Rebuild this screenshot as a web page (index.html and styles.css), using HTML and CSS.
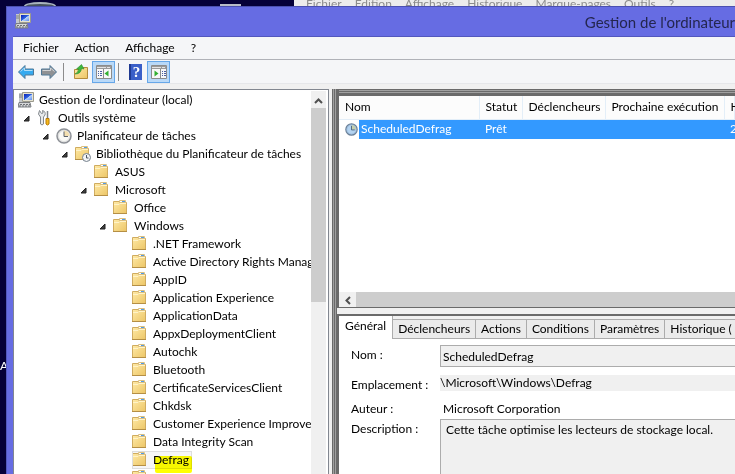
FILE: index.html
```html
<!DOCTYPE html>
<html lang="fr">
<head>
    <meta charset="UTF-8">
    <meta name="viewport" content="width=device-width, initial-scale=1.0">
    <title>Gestion de l'ordinateur</title>
    <link rel="stylesheet" href="styles.css">
</head>
<body>
    <!-- shared icons -->
    <svg class="defs" width="0" height="0" aria-hidden="true">
        <linearGradient id="gold" x1="0" y1="0" x2="1" y2="1">
            <stop offset="0" stop-color="#ffeaa6"/>
            <stop offset="1" stop-color="#ecc566"/>
        </linearGradient>
        <linearGradient id="screen" x1="0" y1="0" x2="1" y2="1">
            <stop offset="0" stop-color="#0a22b8"/>
            <stop offset="0.5" stop-color="#2f63e0"/>
            <stop offset="0.55" stop-color="#b9d4fb"/>
            <stop offset="1" stop-color="#5d8cf0"/>
        </linearGradient>
        <symbol id="folder" viewBox="0 0 16 16">
            <path d="M0.500 1.500h6v1h7v11h-13z" fill="url(#gold)" stroke="#d0ac60"/>
            <path d="M6.500 0.500h6v2h-6z" fill="#fff" stroke="#dcc080"/>
            <path d="M9 1h3v1h-3z" fill="#4f9be8"/>
            <path d="M1 4.500h5l1-1h6" fill="none" stroke="#fff3c8"/>
            <path d="M0 13.500h14" stroke="#b58f45"/>
        </symbol>
        <symbol id="computer" viewBox="0 0 16 16">
            <path d="M4.500 0.500h11v9h-11z" fill="#e6e3d2" stroke="#9b9a8d"/>
            <path d="M6 2h8v6h-8z" fill="url(#screen)"/>
            <path d="M1 1h3v9h-3z" fill="#c4c8cc"/>
            <path d="M1 3h3M1 5h3" stroke="#7d8288"/>
            <path d="M8 10h4v2h-4z" fill="#8b8b85"/>
            <path d="M1 10.500h11l1 4.500h-13z" fill="#d5d7d9" stroke="#7b7e82"/>
            <path d="M2 12.500h10M1 14h11" stroke="#6d7074" stroke-dasharray="2 1"/>
        </symbol>
        <symbol id="clock" viewBox="0 0 16 16">
            <circle cx="8" cy="8" r="7" fill="#eceae6" stroke="#8d9197" stroke-width="1.500"/>
            <circle cx="8" cy="8" r="5.500" fill="#fafaf7" stroke="#c9ccd0" stroke-width="0.500"/>
            <path d="M8 8V2.500A5.500 5.500 0 0 1 13.500 8z" fill="#f3dfb0"/>
            <path d="M8 3.500V8.500H12" fill="none" stroke="#5c626b"/>
        </symbol>
        <symbol id="clock-selected" viewBox="0 0 16 16">
            <circle cx="8" cy="8" r="7" fill="#a9c9ea" stroke="#6d8299" stroke-width="1.500"/>
            <circle cx="8" cy="8" r="5.500" fill="#b4d3f0" stroke="#8fb2d4" stroke-width="0.500"/>
            <path d="M8 8V2.500A5.500 5.500 0 0 1 13.500 8z" fill="#c5cfae"/>
            <path d="M8 3.500V8.500H12" fill="none" stroke="#3f5873"/>
        </symbol>
        <symbol id="tools" viewBox="0 0 16 16">
            <path d="M2.500 0.500L4.500 3.500L6 3L5.500 0.500Q9 1.500 8 5L6.500 7L6.500 14Q5 16 3.500 14L3.500 7Q0 4.500 2.500 0.500z" fill="#e7e9eb" stroke="#83888d"/>
            <path d="M10.500 1v7" stroke="#7d8288" stroke-width="1.500"/>
            <path d="M9 8.500h3v5.500q-1.500 2-3 0z" fill="#f7b91c" stroke="#b67a08"/>
        </symbol>
        <symbol id="library" viewBox="0 0 16 16">
            <use href="#folder" width="16" height="16"/>
            <circle cx="11.500" cy="11.500" r="4" fill="#f2f4f6" stroke="#77828d"/>
            <path d="M11.500 9v3h2" fill="none" stroke="#4c5763"/>
        </symbol>
        <symbol id="arrow" viewBox="0 0 16 16">
            <path d="M0.500 8L7 1.500V5H15.500V11H7V14.500z" fill="currentColor" stroke="#4f7897"/>
            <path d="M2.500 7.500L6.500 4V6.500H14.500" fill="none" stroke="#fff" stroke-opacity="0.600"/>
        </symbol>
        <symbol id="expanded" viewBox="0 0 7 7">
            <path d="M6 1v5h-5z" fill="#404040" stroke="#202020"/>
        </symbol>
    </svg>

    <div class="desktop-top">
        <span class="bin"></span>
        <span class="shortcut"></span>
        <div class="browser-menu">
            <span>Fichier</span><span>Edition</span><span>Affichage</span><span>Historique</span><span>Marque-pages</span><span>Outils</span><span>?</span>
        </div>
    </div>

    <div class="desktop">
        <div class="desktop-left">A</div>

        <div class="window">
            <header class="titlebar">
                <svg class="icon"><use href="#computer"/></svg>
                <h1>Gestion de l'ordinateur</h1>
            </header>

            <div class="client">
                <nav class="menubar">
                    <button>Fichier</button>
                    <button>Action</button>
                    <button>Affichage</button>
                    <button>?</button>
                </nav>

                <div class="toolbar">
                    <button class="tool back" aria-label="Précédent"><svg class="icon"><use href="#arrow"/></svg></button>
                    <button class="tool next" aria-label="Suivant"><svg class="icon"><use href="#arrow"/></svg></button>
                    <span class="separator"></span>
                    <button class="tool" aria-label="Dossier parent">
                        <svg class="icon" viewBox="0 0 16 16">
                            <path d="M1.500 5.500h6l1-2h6v11h-13z" fill="url(#gold)" stroke="#b48c3c"/>
                            <path d="M2 10Q5.500 8.500 5.500 5L3.500 5L8.500 0.500L11 5L8.500 4.500Q8 10 2 10z" fill="#3cb83c" stroke="#2b8a2e" stroke-width="0.600"/>
                        </svg>
                    </button>
                    <button class="tool active" aria-label="Arborescence">
                        <svg class="icon" viewBox="0 0 16 16">
                            <path d="M0.500 1.500h15v13h-15z" fill="#f8f8f8" stroke="#8c8c8c"/>
                            <path d="M1 2h14v3h-14z" fill="#9a9a9a"/>
                            <path d="M1 3.500h9M11 3.500h3" stroke="#e4e4e4"/>
                            <path d="M7.500 5v9" stroke="#8c8c8c"/>
                            <path d="M2 7.500h4M2 9.500h4M2 11.500h4" stroke="#4a5fa0" stroke-dasharray="1 1 3"/>
                            <path d="M12.500 6.500v6l-4-3z" fill="#32b032"/>
                        </svg>
                    </button>
                    <span class="separator"></span>
                    <button class="tool help" aria-label="Aide"><span class="book">?</span></button>
                    <button class="tool active" aria-label="Volet Actions">
                        <svg class="icon" viewBox="0 0 16 16">
                            <path d="M0.500 1.500h15v13h-15z" fill="#f8f8f8" stroke="#8c8c8c"/>
                            <path d="M1 2h14v3h-14z" fill="#9a9a9a"/>
                            <path d="M1 3.500h9M11 3.500h3" stroke="#e4e4e4"/>
                            <path d="M9.500 5v9" stroke="#8c8c8c"/>
                            <path d="M11 7.500h4M11 9.500h4M11 11.500h4" stroke="#4a5fa0" stroke-dasharray="1 1 3"/>
                            <path d="M3.500 6.500v6l4-3z" fill="#32b032"/>
                        </svg>
                    </button>
                </div>

                <main class="panes">
                    <section class="tree-pane">
                        <ul class="tree">
                            <li class="root"><svg class="icon"><use href="#computer"/></svg>Gestion de l'ordinateur (local)</li>
                            <li class="level1"><svg class="twisty"><use href="#expanded"/></svg><svg class="icon"><use href="#tools"/></svg>Outils système</li>
                            <li class="level2"><svg class="twisty"><use href="#expanded"/></svg><svg class="icon"><use href="#clock"/></svg>Planificateur de tâches</li>
                            <li class="level3"><svg class="twisty"><use href="#expanded"/></svg><svg class="icon"><use href="#library"/></svg>Bibliothèque du Planificateur de tâches</li>
                            <li class="level4"><span class="twisty"></span><svg class="icon"><use href="#folder"/></svg>ASUS</li>
                            <li class="level4"><svg class="twisty"><use href="#expanded"/></svg><svg class="icon"><use href="#folder"/></svg>Microsoft</li>
                            <li class="level5"><span class="twisty"></span><svg class="icon"><use href="#folder"/></svg>Office</li>
                            <li class="level5"><svg class="twisty"><use href="#expanded"/></svg><svg class="icon"><use href="#folder"/></svg>Windows</li>
                            <li class="level6"><span class="twisty"></span><svg class="icon"><use href="#folder"/></svg>.NET Framework</li>
                            <li class="level6"><span class="twisty"></span><svg class="icon"><use href="#folder"/></svg>Active Directory Rights Manag</li>
                            <li class="level6"><span class="twisty"></span><svg class="icon"><use href="#folder"/></svg>AppID</li>
                            <li class="level6"><span class="twisty"></span><svg class="icon"><use href="#folder"/></svg>Application Experience</li>
                            <li class="level6"><span class="twisty"></span><svg class="icon"><use href="#folder"/></svg>ApplicationData</li>
                            <li class="level6"><span class="twisty"></span><svg class="icon"><use href="#folder"/></svg>AppxDeploymentClient</li>
                            <li class="level6"><span class="twisty"></span><svg class="icon"><use href="#folder"/></svg>Autochk</li>
                            <li class="level6"><span class="twisty"></span><svg class="icon"><use href="#folder"/></svg>Bluetooth</li>
                            <li class="level6"><span class="twisty"></span><svg class="icon"><use href="#folder"/></svg>CertificateServicesClient</li>
                            <li class="level6"><span class="twisty"></span><svg class="icon"><use href="#folder"/></svg>Chkdsk</li>
                            <li class="level6"><span class="twisty"></span><svg class="icon"><use href="#folder"/></svg>Customer Experience Improve</li>
                            <li class="level6"><span class="twisty"></span><svg class="icon"><use href="#folder"/></svg>Data Integrity Scan</li>
                            <li class="level6"><span class="twisty"></span><span class="selected"><svg class="icon"><use href="#folder"/></svg>Defrag<span class="marker"></span></span></li>
                            <li class="level6"><span class="twisty"></span><svg class="icon"><use href="#folder"/></svg></li>
                        </ul>
                        <div class="scroll-v">
                            <button class="scroll-up" aria-label="Défiler vers le haut"><svg width="9" height="6" viewBox="0 0 9 6"><path d="M1 5L4.500 1.500L8 5" fill="none" stroke="#505050" stroke-width="2"/></svg></button>
                            <div class="thumb-v"></div>
                        </div>
                    </section>

                    <section class="detail-pane">
                        <div class="task-list">
                            <table>
                                <colgroup>
                                    <col class="col-name"><col class="col-status"><col class="col-triggers"><col class="col-next"><col class="col-last">
                                </colgroup>
                                <thead>
                                    <tr><th>Nom</th><th>Statut</th><th>Déclencheurs</th><th>Prochaine exécution</th><th>H</th></tr>
                                </thead>
                                <tbody>
                                    <tr>
                                        <td class="name"><span class="name-cell"><svg class="task-icon"><use href="#clock-selected"/></svg><span>ScheduledDefrag</span></span></td>
                                        <td>Prêt</td><td></td><td></td><td>2</td>
                                    </tr>
                                </tbody>
                            </table>
                            <div class="scroll-h">
                                <button class="scroll-left" aria-label="Défiler vers la gauche"><svg width="6" height="9" viewBox="0 0 6 9"><path d="M5 1L1.500 4.500L5 8" fill="none" stroke="#505050" stroke-width="2"/></svg></button>
                                <div class="thumb-h"></div>
                            </div>
                        </div>

                        <div class="properties">
                            <div class="tabs" role="tablist">
                                <button class="tab current" role="tab" aria-selected="true">Général</button>
                                <button class="tab" role="tab">Déclencheurs</button>
                                <button class="tab" role="tab">Actions</button>
                                <button class="tab" role="tab">Conditions</button>
                                <button class="tab" role="tab">Paramètres</button>
                                <button class="tab" role="tab">Historique (</button>
                            </div>
                            <form class="general">
                                <label for="name">Nom :</label>
                                <input id="name" class="boxed" type="text" value="ScheduledDefrag" readonly>
                                <label for="location">Emplacement :</label>
                                <input id="location" class="location" type="text" value="\Microsoft\Windows\Defrag" readonly>
                                <label for="author">Auteur :</label>
                                <output id="author">Microsoft Corporation</output>
                                <label for="description">Description :</label>
                                <textarea id="description" readonly>Cette tâche optimise les lecteurs de stockage local.</textarea>
                            </form>
                        </div>
                    </section>
                </main>
            </div>
        </div>
    </div>
</body>
</html>
```
FILE: styles.css
```css
* {
    box-sizing: border-box;
}

body {
    margin: 0;
    height: 100vh;
    display: flex;
    flex-direction: column;
    overflow: hidden;
    background-color: #050038;
    color: #000;
    font-family: Lato, "Open Sans", sans-serif;
    font-size: 12px;
    line-height: 18px;
}

button, input, textarea {
    font: inherit;
    color: inherit;
    margin: 0;
    padding: 0;
    border: none;
    border-radius: 0;
    background: none;
}

.defs {
    position: absolute;
}

.icon {
    width: 16px;
    height: 16px;
    flex: none;
}

/* desktop behind the window */
.desktop-top {
    display: flex;
    height: 6px;
    flex: none;
    overflow: hidden;
}

.bin {
    width: 32px;
    height: 8px;
    margin: 2px 0 0 24px;
    border-radius: 50%;
    border: 2px solid #a9b4bd;
    background-color: #46525f;
    flex: none;
}

.shortcut {
    width: 21px;
    height: 3px;
    margin: 4px 53px 0 164px;
    background-color: #b8bcc8;
    flex: none;
}

.browser-menu {
    flex: 1;
    display: flex;
    gap: 13px;
    padding-left: 12px;
    background-color: #ececec;
    color: #8c8c8c;
    line-height: 8px;
    white-space: nowrap;
}

.desktop {
    flex: 1;
    min-height: 0;
    display: flex;
}

.desktop-left {
    width: 6px;
    flex: none;
    padding-top: 351px;
    overflow: hidden;
    color: #fff;
}

/* window */
.window {
    flex: 1;
    min-width: 0;
    display: flex;
    flex-direction: column;
    padding-left: 6px;
    background-color: #666ce3;
    border-top: 1px solid #4b50b0;
    border-left: 1px solid #5257bd;
}

.titlebar {
    height: 30px;
    flex: none;
    display: flex;
    align-items: center;
    justify-content: space-between;
    padding-left: 2px;
    border-bottom: 1px solid #5257bd;
}

.titlebar .icon {
    margin-bottom: 2px;
}

.titlebar h1 {
    margin: 0;
    font-size: 15px;
    font-weight: normal;
    color: #24264f;
    white-space: nowrap;
}

.client {
    flex: 1;
    min-height: 0;
    display: flex;
    flex-direction: column;
    background-color: #f0f0f0;
}

.menubar {
    display: flex;
    height: 23px;
    flex: none;
    padding-left: 2px;
    background-color: #f5f6f8;
    border-bottom: 1px solid #b0b2b8;
}

.menubar button {
    padding: 0 8px;
}

.toolbar {
    display: flex;
    align-items: center;
    height: 24px;
    flex: none;
    padding-left: 1px;
    background-color: #f5f6f8;
    border-bottom: 1px solid #e6e7ea;
}

.tool {
    display: flex;
    align-items: center;
    justify-content: center;
    width: 23px;
    height: 22px;
}

.tool.active {
    background-color: #b9d9f8;
    border: 1px solid #66a7e8;
}

.back {
    color: #35aaf0;
}

.next {
    color: #8f9194;
}

.next .icon {
    transform: scaleX(-1);
}

.separator {
    width: 1px;
    height: 18px;
    margin: 0 5px 0 3px;
    background-color: #8c8c8c;
}

.book {
    width: 13px;
    height: 16px;
    background-color: #3a5fc8;
    border-left: 2px solid #1f3a92;
    color: #fff;
    font-family: "Liberation Serif", serif;
    font-size: 15px;
    font-weight: bold;
    line-height: 16px;
}

.panes {
    flex: 1;
    min-height: 0;
    display: grid;
    grid-template-columns: 316px 1fr;
    column-gap: 3px;
    padding-top: 5px;
}

/* tree */
.tree-pane {
    display: flex;
    min-height: 0;
    background-color: #fff;
    border: 1px solid #828790;
    border-bottom: none;
    padding-top: 1px;
}

.tree {
    flex: 1;
    min-width: 0;
    margin: 0;
    padding: 0;
    list-style: none;
    overflow: hidden;
    white-space: nowrap;
}

.tree li {
    display: flex;
    align-items: center;
    height: 18px;
}

.tree .icon {
    margin-right: 5px;
}

.twisty {
    width: 7px;
    height: 7px;
    margin-right: 7px;
    flex: none;
}

.root { padding-left: 4px; }
.level1 { padding-left: 9px; }
.level2 { padding-left: 28px; }
.level3 { padding-left: 47px; }
.level4 { padding-left: 66px; }
.level5 { padding-left: 85px; }
.level6 { padding-left: 104px; }

.selected {
    position: relative;
    display: flex;
    align-items: center;
    height: 18px;
    padding-right: 3px;
    background-color: #f6f6f6;
    outline: 1px solid #dedede;
    outline-offset: -1px;
}

/* highlighter stroke over the selected label */
.marker {
    position: absolute;
    left: 23px;
    right: 0;
    top: 5px;
    height: 17px;
    border-radius: 2px;
    background-color: #ff0;
    mix-blend-mode: multiply;
}

.scroll-v {
    width: 17px;
    flex: none;
    padding-right: 2px;
    display: flex;
    flex-direction: column;
    background-color: #f0f0f0;
    background-clip: content-box;
}

.scroll-up {
    height: 17px;
    flex: none;
}

.thumb-v {
    height: 194px;
    background-color: #cdcdcd;
}

/* right side, inside a ridged frame */
.detail-pane {
    display: grid;
    grid-template-rows: 219px 1fr;
    row-gap: 6px;
    min-width: 0;
    min-height: 0;
    padding-left: 5px;
    background: repeating-linear-gradient(90deg, #6a6a6a 0 1px, #a0a0a0 1px 2px);
}

.task-list {
    display: flex;
    flex-direction: column;
    min-width: 0;
    overflow: hidden;
    background-color: #fff;
    background-image: repeating-linear-gradient(#6a6a6a 0 1px, #a0a0a0 1px 2px);
    background-size: 100% 5px;
    background-repeat: no-repeat;
    border-left: 2px solid #6a6a6a;
    border-bottom: 1px solid #6a6a6a;
    box-shadow: 0 6px #f0f0f0;
    padding-top: 5px;
}

table {
    width: 100%;
    table-layout: fixed;
    border-collapse: collapse;
    border-top: 2px solid #6a6a6a;
    white-space: nowrap;
}

.col-name { width: 140px; }
.col-status { width: 43px; }
.col-triggers { width: 83px; }
.col-next { width: 119px; }

th, td {
    padding: 0 0 0 6px;
    font-weight: normal;
    text-align: left;
}

th {
    height: 24px;
    border-right: 1px solid #e3eef8;
    border-bottom: 1px solid #e3eef8;
    background-color: #fcfcfc;
}

td {
    height: 19px;
    background-color: #3399ff;
    color: #fff;
}

td.name {
    background-color: #fff;
}

.name-cell {
    display: flex;
    align-items: center;
    gap: 1px;
}

.name-cell span {
    flex: 1;
    height: 19px;
    padding-left: 2px;
    background-color: #3399ff;
}

.task-icon {
    width: 13px;
    height: 13px;
}

.scroll-h {
    display: flex;
    height: 15px;
    margin-top: auto;
    background-color: #f0f0f0;
}

.scroll-left {
    width: 17px;
    flex: none;
}

.thumb-h {
    flex: 1;
    background-color: #cdcdcd;
}

.properties {
    display: flex;
    flex-direction: column;
    min-width: 0;
    min-height: 0;
    background-color: #fff;
    border-top: 2px solid #6a6a6a;
    border-left: 2px solid #6a6a6a;
}

.tabs {
    display: flex;
    flex: none;
    height: 23px;
    align-items: flex-end;
    background-color: #f0f0f0;
    overflow: hidden;
    white-space: nowrap;
}

.tab {
    height: 20px;
    flex: none;
    padding: 0 5px;
    background-color: #ebebeb;
    border: 1px solid #acacac;
    border-left: none;
    line-height: 18px;
}

.tab.current {
    height: 23px;
    padding: 0 6px 3px;
    background-color: #fff;
    border-top: none;
    border-bottom: none;
}

.general {
    flex: 1;
    min-height: 0;
    display: grid;
    grid-template-columns: 89px 1fr;
    grid-template-rows: 30px 24px 20px 1fr;
    align-items: start;
    padding: 6px 0 0 12px;
}

.general label {
    padding-top: 1px;
}

.boxed {
    width: 100%;
    height: 22px;
    padding: 0 2px;
    background-color: #f0f0f0;
    border: 1px solid #acacac;
    border-right: none;
}

.location {
    width: 100%;
    height: 16px;
    background-color: #f0f0f0;
}

output {
    padding: 1px 3px 0;
}

textarea {
    align-self: stretch;
    padding: 1px 5px;
    resize: none;
    overflow: hidden;
    background-color: #f0f0f0;
    border: 1px solid #acacac;
    border-right: none;
    border-bottom: none;
}
```
